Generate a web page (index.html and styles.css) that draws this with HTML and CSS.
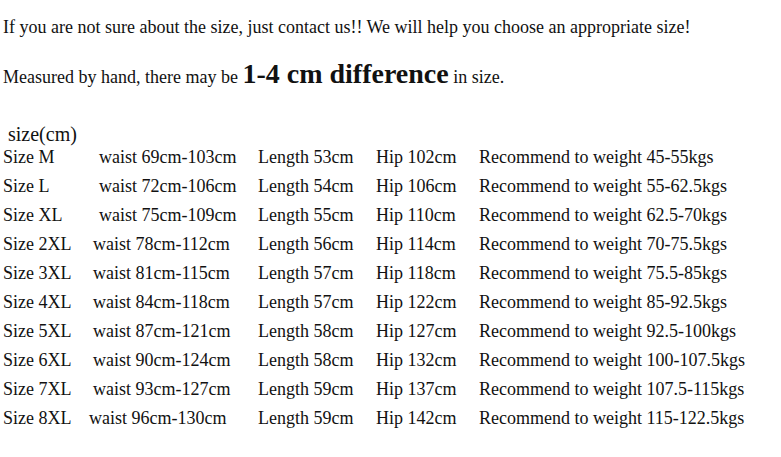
FILE: index.html
```html
<!DOCTYPE html>
<html>
<head>
<meta charset="utf-8">
<link rel="stylesheet" href="styles.css">
</head>
<body>
<p class="intro">If you are not sure about the size, just contact us!! We will help you choose an appropriate size!</p>
<p class="note">Measured by hand, there may be <b class="big">1-4 cm difference</b> in size.</p>
<div class="caption">size(cm)</div>
<div class="table">
  <div class="row"><span>Size M</span><span class="waist shift">waist 69cm-103cm</span><span>Length 53cm</span><span>Hip 102cm</span><span>Recommend to weight 45-55kgs</span></div>
  <div class="row"><span>Size L</span><span class="waist shift">waist 72cm-106cm</span><span>Length 54cm</span><span>Hip 106cm</span><span>Recommend to weight 55-62.5kgs</span></div>
  <div class="row"><span>Size XL</span><span class="waist shift">waist 75cm-109cm</span><span>Length 55cm</span><span>Hip 110cm</span><span>Recommend to weight 62.5-70kgs</span></div>
  <div class="row"><span>Size 2XL</span><span class="waist">waist 78cm-112cm</span><span>Length 56cm</span><span>Hip 114cm</span><span>Recommend to weight 70-75.5kgs</span></div>
  <div class="row"><span>Size 3XL</span><span class="waist">waist 81cm-115cm</span><span>Length 57cm</span><span>Hip 118cm</span><span>Recommend to weight 75.5-85kgs</span></div>
  <div class="row"><span>Size 4XL</span><span class="waist">waist 84cm-118cm</span><span>Length 57cm</span><span>Hip 122cm</span><span>Recommend to weight 85-92.5kgs</span></div>
  <div class="row"><span>Size 5XL</span><span class="waist">waist 87cm-121cm</span><span>Length 58cm</span><span>Hip 127cm</span><span>Recommend to weight 92.5-100kgs</span></div>
  <div class="row"><span>Size 6XL</span><span class="waist">waist 90cm-124cm</span><span>Length 58cm</span><span>Hip 132cm</span><span>Recommend to weight 100-107.5kgs</span></div>
  <div class="row"><span>Size 7XL</span><span class="waist">waist 93cm-127cm</span><span>Length 59cm</span><span>Hip 137cm</span><span>Recommend to weight 107.5-115kgs</span></div>
  <div class="row"><span>Size 8XL</span><span class="waist pull">waist 96cm-130cm</span><span>Length 59cm</span><span>Hip 142cm</span><span>Recommend to weight 115-122.5kgs</span></div>
</div>
</body>
</html>
```
FILE: styles.css
```css
html, body {
  margin: 0;
  padding: 0;
  background: #fff;
}
body {
  font-family: "Liberation Serif", "Times New Roman", serif;
  color: #111;
  font-size: 18px;
  padding: 0 0 0 3px;
}
.intro {
  margin: 0;
  padding-top: 17px;
  line-height: 20px;
}
.note {
  margin: 0;
  padding-top: 24px;
  line-height: 32px;
}
.big {
  font-size: 28px;
  line-height: 20px;
}
.caption {
  margin-top: 32px;
  padding-left: 5px;
  font-size: 20px;
  line-height: 18px;
}
.table {
  display: flex;
  flex-direction: column;
}
.row {
  display: grid;
  grid-template-columns: 90px 165px 118px 103px auto;
  height: 29px;
  line-height: 29px;
  white-space: nowrap;
}
.waist.shift {
  padding-left: 6px;
}
.waist.pull {
  margin-left: -4px;
}
```
